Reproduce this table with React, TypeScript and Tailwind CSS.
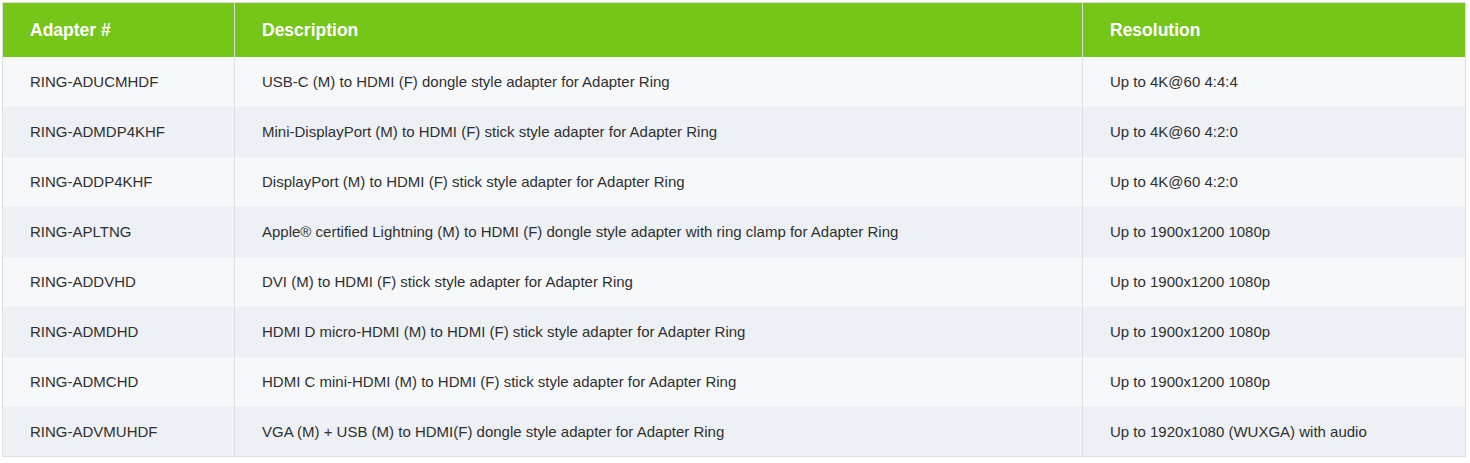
const rows = [
  ['RING-ADUCMHDF', 'USB-C (M) to HDMI (F) dongle style adapter for Adapter Ring', 'Up to 4K@60 4:4:4'],
  ['RING-ADMDP4KHF', 'Mini-DisplayPort (M) to HDMI (F) stick style adapter for Adapter Ring', 'Up to 4K@60 4:2:0'],
  ['RING-ADDP4KHF', 'DisplayPort (M) to HDMI (F) stick style adapter for Adapter Ring', 'Up to 4K@60 4:2:0'],
  ['RING-APLTNG', 'Apple® certified Lightning (M) to HDMI (F) dongle style adapter with ring clamp for Adapter Ring', 'Up to 1900x1200 1080p'],
  ['RING-ADDVHD', 'DVI (M) to HDMI (F) stick style adapter for Adapter Ring', 'Up to 1900x1200 1080p'],
  ['RING-ADMDHD', 'HDMI D micro-HDMI (M) to HDMI (F) stick style adapter for Adapter Ring', 'Up to 1900x1200 1080p'],
  ['RING-ADMCHD', 'HDMI C mini-HDMI (M) to HDMI (F) stick style adapter for Adapter Ring', 'Up to 1900x1200 1080p'],
  ['RING-ADVMUHDF', 'VGA (M) + USB (M) to HDMI(F) dongle style adapter for Adapter Ring', 'Up to 1920x1080 (WUXGA) with audio'],
];

export default function App() {
  return (
    <div className="bg-white pt-[2px] pl-[2px] font-['Liberation_Sans',Arial,sans-serif]">
      <table className="w-[1464px] border-collapse border border-[#dcdfe3] table-fixed">
        <colgroup>
          <col className="w-[232px]" />
          <col className="w-[848px]" />
          <col />
        </colgroup>
        <thead>
          <tr className="bg-[#76c519] text-white h-[54px]">
            <th className="text-left font-bold text-[17.5px] pl-[27px] border-r border-[#dcdfe3]">Adapter #</th>
            <th className="text-left font-bold text-[17.5px] pl-[27px] border-r border-[#dcdfe3]">Description</th>
            <th className="text-left font-bold text-[17.5px] pl-[27px]">Resolution</th>
          </tr>
        </thead>
        <tbody>
          {rows.map((r, i) => (
            <tr key={r[0]} className={`h-[50px] text-[15px] text-[#303030] ${i % 2 === 0 ? 'bg-[#f7f8fa]' : 'bg-[#edf0f4]'}`}>
              <td className="pl-[27px] pt-[2px] border-r border-[#dcdfe3]">{r[0]}</td>
              <td className="pl-[27px] pt-[2px] border-r border-[#dcdfe3]">{r[1]}</td>
              <td className="pl-[27px] pt-[2px]">{r[2]}</td>
            </tr>
          ))}
        </tbody>
      </table>
    </div>
  );
}
